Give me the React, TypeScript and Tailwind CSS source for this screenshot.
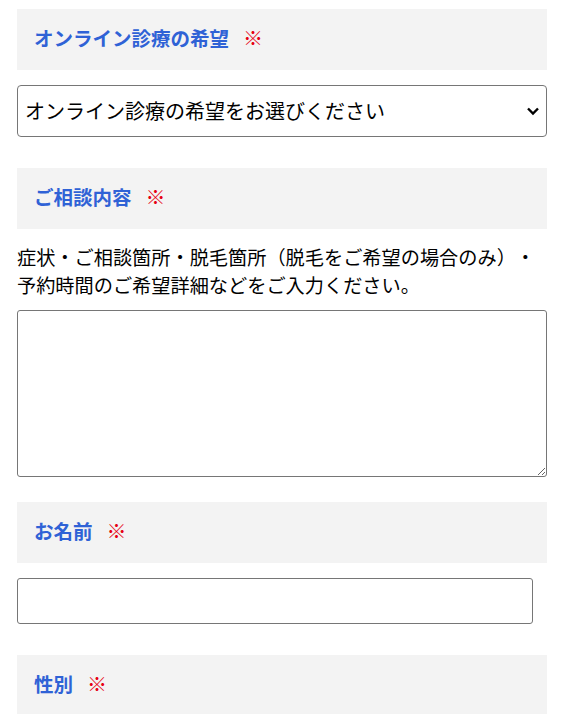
import React from "react"

const font = { fontFamily: '"Noto Sans CJK JP", "Noto Sans", sans-serif' }

function Heading({ title }: { title: string }) {
  return (
    <div className="flex h-[61px] items-center bg-[#f3f3f3] pb-[4px] pl-[17px]">
      <span className="text-[19.5px] font-bold leading-none text-[#2f62d6]">{title}</span>
      <span className="ml-[14px] text-[20px] leading-none text-[#e60012]">※</span>
    </div>
  )
}

export default function App() {
  return (
    <div className="bg-white px-[17px] pt-[9px] text-black [text-spacing-trim:space-all]" style={font}>
      <Heading title="オンライン診療の希望" />

      <div className="relative mt-[15px]">
        <select
          defaultValue=""
          className="block h-[52px] w-full appearance-none rounded-[4px] border border-[#767676] bg-white pl-[7px] pr-8 text-[20px] leading-none text-black outline-none"
          style={font}
        >
          <option value="">オンライン診療の希望をお選びください</option>
        </select>
        <svg
          className="pointer-events-none absolute right-[7px] top-[21px]"
          width="14"
          height="10"
          viewBox="0 0 14 10"
        >
          <path d="M2 2.5 L7 7.5 L12 2.5" fill="none" stroke="#000" strokeWidth="2.4" />
        </svg>
      </div>

      <div className="mt-[31px]">
        <Heading title="ご相談内容" />
      </div>

      <p className="mt-[14px] text-[19.2px] leading-[28px]">
        症状・ご相談箇所・脱毛箇所（脱毛をご希望の場合のみ）・予約時間のご希望詳細などをご入力ください。
      </p>

      <textarea
        className="mt-[11px] block h-[167px] w-full rounded-[3px] border border-[#767676] bg-white outline-none"
        style={font}
      />

      <div className="mt-[25px]">
        <Heading title="お名前" />
      </div>

      <input
        type="text"
        className="mt-[15px] block h-[46px] w-[516px] rounded-[3px] border border-[#767676] bg-white outline-none"
        style={font}
      />

      <div className="mt-[31px]">
        <Heading title="性別" />
      </div>
    </div>
  )
}
